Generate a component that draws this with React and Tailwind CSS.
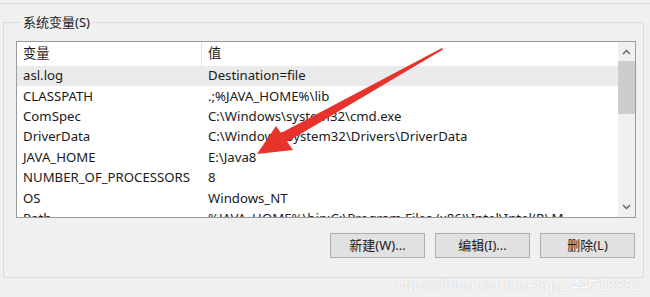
const rows = [
  ['asl.log', 'Destination=file'],
  ['CLASSPATH', '.;%JAVA_HOME%\\lib'],
  ['ComSpec', 'C:\\Windows\\system32\\cmd.exe'],
  ['DriverData', 'C:\\Windows\\System32\\Drivers\\DriverData'],
  ['JAVA_HOME', 'E:\\Java8'],
  ['NUMBER_OF_PROCESSORS', '8'],
  ['OS', 'Windows_NT'],
  ['Path', '%JAVA_HOME%\\bin;C:\\Program Files (x86)\\Intel\\Intel(R) M'],
];

const font = { fontFamily: '"Noto Sans", "Noto Sans CJK SC", sans-serif' };

function Chevron({ up }) {
  return (
    <svg width="9" height="6" viewBox="0 0 9 6" className="text-[#606060]">
      <path d={up ? 'M1 5 L4.5 1.5 L8 5' : 'M1 1 L4.5 4.5 L8 1'} fill="none" stroke="currentColor" strokeWidth="1.3" />
    </svg>
  );
}

function WinButton({ children, className = '' }) {
  return (
    <button className={`w-[95px] h-[25px] bg-[#e1e1e1] border border-[#adadad] text-[13px] text-[#1a1a1a] ${className}`}>
      {children}
    </button>
  );
}

export default function App() {
  return (
    <div className="relative w-[650px] h-[297px] overflow-hidden bg-[#f0f0f0] text-[#1a1a1a]" style={font}>
      <div className="h-[4px] border-b border-[#dcdcdc]" />

      <fieldset className="ml-[3px] mt-[8px] w-[641px] h-[266px] border border-[#dcdcdc] pl-[12px] pr-[7px]">
        <legend className="ml-[5px] px-[2px] text-[13px] leading-[20px]">系统变量(S)</legend>

        <div className="mt-[9px] w-[620px] h-[177px] border border-[#9a9a9a] bg-white flex overflow-hidden">
          <div className="flex-1 text-[13.2px]">
            <div className="flex h-[24px] items-center">
              <div className="w-[185px] h-full pl-[6px] flex items-center border-r border-[#e5e5e5]">变量</div>
              <div className="pl-[6px]">值</div>
            </div>
            {rows.map(([name, value], i) => (
              <div key={name} className={`flex h-[20.4px] items-center whitespace-nowrap ${i === 0 ? 'bg-[#ebebeb]' : ''}`}>
                <div className="w-[185px] pl-[6px]">{name}</div>
                <div className="pl-[6px]">{value}</div>
              </div>
            ))}
          </div>
          <div className="w-[17px] bg-[#f0f0f0] flex flex-col items-center">
            <div className="h-[19px] flex items-center justify-center">
              <Chevron up />
            </div>
            <div className="w-[17px] h-[53px] bg-[#cdcdcd]" />
            <div className="flex-1" />
            <div className="h-[20px] flex items-center justify-center">
              <Chevron />
            </div>
          </div>
        </div>

        <div className="mt-[15px] flex justify-end gap-[10px] pr-[1px]">
          <WinButton>新建(W)...</WinButton>
          <WinButton>编辑(I)...</WinButton>
          <WinButton>删除(L)</WinButton>
        </div>
      </fieldset>

      <div className="mt-[21px] flex justify-end gap-[7px] pr-[22px]">
        <div className="w-[95px] h-[25px] bg-[#e1e1e1] border-2 border-[#0078d7]" />
        <div className="w-[95px] h-[25px] bg-[#e1e1e1] border border-[#adadad]" />
      </div>

      <div
        className="absolute right-[8px] top-[274px] text-[15px] text-white tracking-[0.5px]"
        style={{ fontFamily: '"Liberation Sans", sans-serif', textShadow: '0 0 1px #b0b0b0' }}
      >
        https://blog.csdn.net/qq_44718992
      </div>

      <svg className="absolute left-0 top-0 pointer-events-none" width="650" height="297">
        <polygon points="442,48 443,49.5 287,142 281,133" fill="#e8322c" />
        <polygon points="257,154 276,126 293,150" fill="#e8322c" />
      </svg>
    </div>
  );
}
